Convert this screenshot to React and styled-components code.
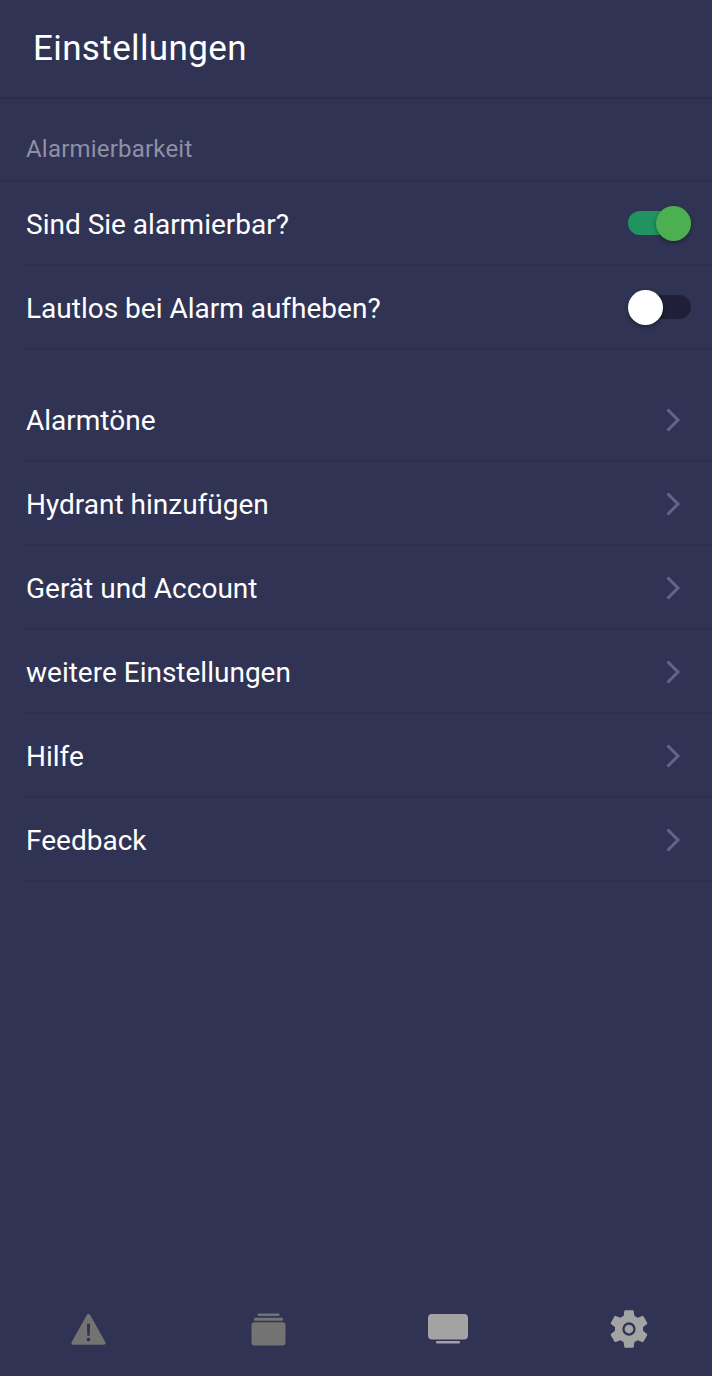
import React from "react";
import styled, { createGlobalStyle } from "styled-components";

const GlobalStyle = createGlobalStyle`
  html, body {
    margin: 0;
    padding: 0;
    background: #313354;
  }
`;

const mainRows = ["Alarmtöne", "Hydrant hinzufügen", "Gerät und Account", "weitere Einstellungen", "Hilfe", "Feedback"];

const Chevron = () => (
  <ChevronIcon viewBox="0 0 16 26" fill="none">
    <path d="M2.5 2.5 L13 13 L2.5 23.5" stroke="#63648a" strokeWidth="3" />
  </ChevronIcon>
);

const WarningIcon = () => (
  <svg width="35" height="33" viewBox="0 0 36 34">
    <path
      fillRule="evenodd"
      fill="#737373"
      d="M18 1 C18.8 1 19.4 1.4 19.9 2.2 L35.3 29.8 C36.1 31.3 35.4 32.6 33.7 32.6 L2.3 32.6 C0.6 32.6 -0.1 31.3 0.7 29.8 L16.1 2.2 C16.6 1.4 17.2 1 18 1 Z M16.4 11 L16.8 23.5 L19.2 23.5 L19.6 11 Z M18 25.4 A1.9 1.9 0 1 0 18 29.2 A1.9 1.9 0 1 0 18 25.4 Z"
    />
  </svg>
);

const StackIcon = () => (
  <svg width="35" height="33" viewBox="0 0 36 34" fill="#737373">
    <rect x="6.500" y="0.500" width="23" height="2.500" rx="1.200" />
    <rect x="3" y="5" width="30" height="3" rx="1.400" />
    <rect x="0.500" y="9.500" width="35" height="24" rx="3" />
  </svg>
);

const ScreenIcon = () => (
  <svg width="42" height="32" viewBox="0 0 42 32" fill="#a3a3a3">
    <rect x="1" y="1" width="40" height="25.500" rx="4" />
    <rect x="9" y="28" width="24" height="2.500" rx="1" />
  </svg>
);

const GearIcon = () => (
  <svg width="42" height="42" viewBox="0 0 24 24">
    <path
      fillRule="evenodd"
      fill="#a3a3a3"
      d="M19.14 12.94c.04-.3.06-.61.06-.94 0-.32-.02-.64-.07-.94l2.03-1.58a.49.49 0 0 0 .12-.61l-1.92-3.32a.488.488 0 0 0-.59-.22l-2.39.96c-.5-.38-1.03-.7-1.62-.94l-.36-2.54a.484.484 0 0 0-.48-.41h-3.84c-.24 0-.43.17-.47.41l-.36 2.54c-.59.24-1.13.57-1.62.94l-2.39-.96c-.22-.08-.47 0-.59.22L2.74 8.87c-.12.21-.08.47.12.61l2.03 1.58c-.05.3-.09.63-.09.94s.02.64.07.94l-2.03 1.58a.49.49 0 0 0-.12.61l1.92 3.32c.12.22.37.29.59.22l2.39-.96c.5.38 1.03.7 1.62.94l.36 2.54c.05.24.24.41.48.41h3.84c.24 0 .44-.17.47-.41l.36-2.54c.59-.24 1.13-.56 1.62-.94l2.39.96c.22.08.47 0 .59-.22l1.92-3.32c.12-.22.07-.47-.12-.61l-2.01-1.58zM12 15.400A3.400 3.400 0 1 1 12 8.600a3.400 3.400 0 0 1 0 6.800z"
      transform="translate(12 12) scale(1.12) translate(-12 -12)"
    />
    <circle cx="12" cy="12" r="2.500" fill="#a3a3a3" />
  </svg>
);

const App = () => {
  return (
    <Page>
      <GlobalStyle />
      <Header>
        <Title>Einstellungen</Title>
      </Header>
      <SectionLabel>Alarmierbarkeit</SectionLabel>
      <Row>
        <RowText>Sind Sie alarmierbar?</RowText>
        <Switch $on />
      </Row>
      <Row>
        <RowText>Lautlos bei Alarm aufheben?</RowText>
        <Switch />
      </Row>
      <List>
        {mainRows.map((label) => (
          <Row key={label}>
            <RowText>{label}</RowText>
            <Chevron />
          </Row>
        ))}
      </List>
      <BottomBar>
        <TabSlot><WarningIcon /></TabSlot>
        <TabSlot><StackIcon /></TabSlot>
        <TabSlot><ScreenIcon /></TabSlot>
        <TabSlot><GearIcon /></TabSlot>
      </BottomBar>
    </Page>
  );
};

export default App;

const Page = styled.div`
  width: 712px;
  height: 1376px;
  background: #313354;
  display: flex;
  flex-direction: column;
  font-family: Roboto, "Liberation Sans", sans-serif;
  overflow: hidden;
`;

const Header = styled.header`
  height: 97px;
  flex-shrink: 0;
  box-sizing: border-box;
  padding: 0 33px 1px;
  display: flex;
  align-items: center;
  background: #313354;
  box-shadow: 0 1px 3px rgba(20, 21, 40, 0.4);
`;

const Title = styled.h1`
  margin: 0;
  font-size: 35px;
  font-weight: 400;
  color: #ffffff;
  letter-spacing: 0.38px;
`;

const SectionLabel = styled.div`
  height: 85px;
  flex-shrink: 0;
  box-sizing: border-box;
  padding: 20px 26px 0;
  display: flex;
  align-items: center;
  font-size: 24px;
  letter-spacing: 0.2px;
  color: #8f90a3;
  border-bottom: 2px solid #2d2f4e;
`;

const List = styled.div`
  margin-top: 28px;
  display: flex;
  flex-direction: column;
`;

const Row = styled.div`
  height: 84px;
  flex-shrink: 0;
  box-sizing: border-box;
  margin-left: 26px;
  padding: 0 21px 0 0;
  display: flex;
  align-items: center;
  justify-content: space-between;
  border-bottom: 2px solid #2d2f4e;
`;

const RowText = styled.span`
  font-size: 28px;
  padding-top: 2px;
  color: #ffffff;
`;

const ChevronIcon = styled.svg`
  width: 16px;
  height: 26px;
  margin: 2px 10px 0 0;
`;

const Switch = styled.div`
  width: 63px;
  height: 24px;
  border-radius: 12px;
  position: relative;
  background: ${(p) => (p.$on ? "#1f9460" : "#1f2037")};

  &::after {
    content: "";
    position: absolute;
    top: -5.5px;
    left: ${(p) => (p.$on ? "28px" : "0")};
    width: 35px;
    height: 35px;
    border-radius: 50%;
    background: ${(p) => (p.$on ? "#4caf50" : "#ffffff")};
    box-shadow: 0 2px 4px rgba(0, 0, 0, 0.35);
  }
`;

const BottomBar = styled.nav`
  margin-top: auto;
  height: 98px;
  flex-shrink: 0;
  box-sizing: border-box;
  padding: 3px 0 0 66px;
  display: grid;
  grid-template-columns: repeat(4, 44px);
  column-gap: 136.2px;
  border-top: 1px solid #2f3150;
`;

const TabSlot = styled.div`
  display: flex;
  align-items: center;
  justify-content: center;
`;
